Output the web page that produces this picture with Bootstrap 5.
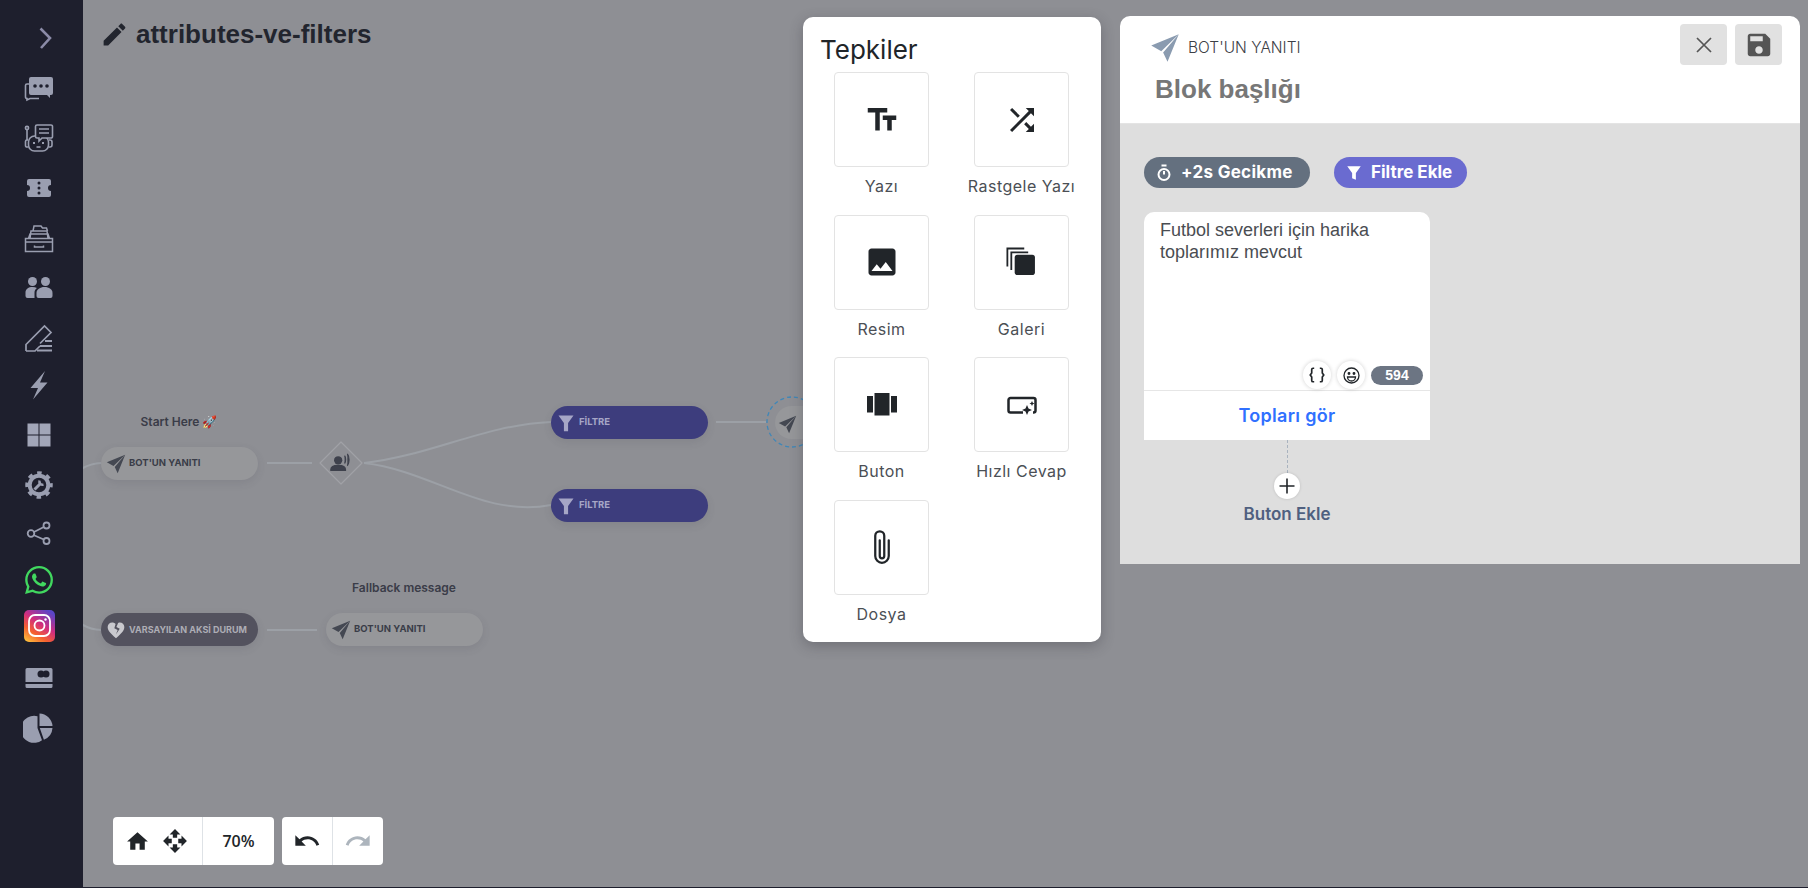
<!DOCTYPE html>
<html lang="tr">
<head>
    <meta charset="UTF-8">
    <meta name="viewport" content="width=device-width, initial-scale=1.0">
    <title>attributes-ve-filters</title>
    <link rel="stylesheet" href="https://cdn.jsdelivr.net/npm/bootstrap@5.3.3/dist/css/bootstrap.min.css">
    <style>
        html, body {
            height: 100%;
            overflow: hidden;
        }

        body {
            background-color: #1e1f2d;
            font-family: "Inter", "Liberation Sans", sans-serif;
        }

        .page-wrap {
            height: 887px;
        }

        /* sidebar */
        .side-nav {
            width: 83px;
            flex: none;
            background-color: #1e1f2d;
            padding-top: 13px;
            position: relative;
            z-index: 2;
        }

        .side-item {
            height: 50px;
            width: 77px;
            color: #9a9eb0;
        }

        .side-item:nth-child(8) { margin-top: -3px; }
        .side-item:nth-child(11) { margin-top: -2px; }
        .side-item:nth-child(12) { margin-top: -3px; }
        .side-item:nth-child(13) { margin-top: -4px; }
        .side-item:nth-child(14) { margin-top: 2px; }
        .side-item:nth-child(15) { margin-top: -1px; }

        /* canvas */
        .flow-canvas {
            background-color: #8e8f94;
            overflow: hidden;
        }

        .flow-title {
            top: 17px;
            left: 17px;
            gap: 7px;
            color: #22252e;
            font-family: "Liberation Sans", sans-serif;
            font-weight: 700;
            font-size: 26px;
            line-height: 34px;
        }

        .flow-lines {
            top: 0;
            left: 0;
        }

        .flow-node {
            width: 157px;
            height: 33px;
            border-radius: 17px;
            padding-left: 5px;
            background-color: #96979a;
            color: #3a3d48;
            font-size: 9.5px;
            font-weight: 700;
            white-space: nowrap;
            box-shadow: 0 3px 8px rgba(60, 60, 70, .12);
        }

        .flow-node svg {
            flex: none;
            margin-right: 3px;
        }

        .node-filter {
            background-color: #3d3d7d;
            color: #a6a6c6;
        }

        .node-fallback {
            background-color: #53525e;
            color: #adadb5;
            font-size: 9px;
        }

        .flow-caption {
            color: #3a3c48;
            font-size: 12px;
            font-weight: 600;
            white-space: nowrap;
            transform: translateX(-50%);
        }

        .tool-group {
            top: 817px;
            height: 48px;
            border-radius: 4px;
            background-color: #fff;
            color: #212529;
        }

        .tool-cell {
            height: 100%;
        }

        .tool-cell + .tool-cell {
            border-left: 1px solid #dee2e6;
        }

        .move-cell {
            width: 89px;
            gap: 12px;
            padding-right: 2px;
        }

        .zoom-value {
            font-family: "Open Sans", sans-serif;
            font-weight: 600;
            font-size: 16px;
        }

        /* Tepkiler panel */
        .react-panel {
            top: 17px;
            left: 720px;
            width: 298px;
            height: 625px;
            border: 0;
            border-radius: 10px;
            box-shadow: 0 4px 14px rgba(40, 40, 50, .3);
        }

        .react-title {
            height: 55px;
            margin: 0;
            padding: 14px 0 0 17px;
            color: #212529;
            font-size: 26px;
            font-weight: 400;
            line-height: 38px;
        }

        .react-grid {
            display: grid;
            grid-template-columns: 95px 95px;
            grid-auto-rows: 142.5px;
            column-gap: 45px;
            padding-left: 31px;
        }

        .react-tile {
            width: 95px;
            height: 95px;
            border: 1px solid #e3e3e3;
            border-radius: 4px;
            color: #212529;
        }

        .react-label {
            margin-top: 8px;
            color: #4b4f55;
            font-size: 16px;
            letter-spacing: .5px;
            line-height: 22px;
            white-space: nowrap;
        }

        /* block editor */
        .block-panel {
            top: 16px;
            left: 1037px;
            width: 680px;
            height: 548px;
            border: 0;
            border-radius: 10px 10px 0 0;
            overflow: hidden;
        }

        .block-head {
            height: 108px;
            flex: none;
            padding: 8px 18px 0 30px;
            border-bottom: 1px solid #e4e4e4;
        }

        .block-kind {
            height: 47px;
            color: #3c4046;
            font-size: 15.5px;
            font-weight: 300;
        }

        .block-heading {
            margin: 3px 0 0 5px;
            color: #777;
            font-family: "Liberation Sans", sans-serif;
            font-size: 26px;
            font-weight: 700;
            line-height: 30px;
        }

        .head-btn {
            width: 47px;
            height: 41px;
            padding: 0;
            border: 0;
            border-radius: 4px;
            background-color: #e1e1e1;
            color: #555;
        }

        .block-body {
            flex: 1;
            padding: 33px 0 0 24px;
            background-color: #dedede;
        }

        .pill-btn {
            height: 31px;
            padding: 0 11px;
            border-radius: 16px;
            color: #fff;
            font-size: 17px;
            font-weight: 700;
            white-space: nowrap;
        }

        .pill-delay {
            width: 166px;
            background-color: #64707f;
            letter-spacing: .3px;
        }

        .pill-filter {
            width: 133px;
            margin-left: -1px;
            background-color: #6a6bd0;
        }

        .msg-box {
            width: 286px;
            margin-top: 24px;
            border-radius: 10px 10px 0 0;
            background-color: #fff;
        }

        .msg-text {
            height: 179px;
            padding: 7px 7px 1px 16px;
            border-bottom: 1px solid #e6e6e6;
            color: #4a4d52;
            font-family: "Liberation Sans", sans-serif;
            font-size: 18px;
            line-height: 22px;
        }

        .msg-tools {
            gap: 6px;
        }

        .msg-tool {
            width: 28px;
            height: 28px;
            border-radius: 50%;
            background-color: #fff;
            box-shadow: 0 0 4px rgba(0, 0, 0, .18);
        }

        .msg-count {
            width: 52px;
            height: 19px;
            border-radius: 10px;
            background-color: #6c7583;
            color: #fff;
            font-size: 14px;
            font-weight: 700;
        }

        .msg-action {
            height: 49px;
            color: #3070ff;
            font-size: 18px;
            font-weight: 600;
            letter-spacing: .3px;
        }

        .add-col {
            width: 286px;
        }

        .add-line {
            height: 33px;
            border-left: 1px dashed #a9b3bf;
        }

        .add-circle {
            width: 26px;
            height: 26px;
            border-radius: 50%;
            background-color: #fff;
            box-shadow: 0 0 3px rgba(0, 0, 0, .15);
        }

        .add-label {
            margin-top: 3px;
            color: #4f6080;
            font-size: 17px;
            font-weight: 600;
        }
    </style>
</head>

<body>
    <div class="page-wrap d-flex">
        <nav class="side-nav d-flex flex-column">
            <div class="side-item d-flex align-items-center justify-content-center">
                <svg width="32" height="32" viewBox="0 0 32 32" fill="none" stroke="#8b8ba7" stroke-width="2.6"><path d="M17.5 6.5 27 16l-9 10"/></svg>
            </div>
            <div class="side-item d-flex align-items-center justify-content-center">
                <svg width="32" height="32" viewBox="0 0 32 32"><path fill="currentColor" d="M8 5h20a2 2 0 0 1 2 2v14a2 2 0 0 1-2 2h-1v3l-3-3H8a2 2 0 0 1-2-2V7a2 2 0 0 1 2-2z"/><path fill="none" stroke="currentColor" stroke-width="1.6" d="M6 12H4a1.5 1.5 0 0 0-1.5 1.5V25A1.5 1.5 0 0 0 4 26.5v1.5l3-1.5h9"/><circle cx="12" cy="14" r="1.8" fill="#1e1f2d"/><circle cx="18" cy="14" r="1.8" fill="#1e1f2d"/><circle cx="24" cy="14" r="1.8" fill="#1e1f2d"/></svg>
            </div>
            <div class="side-item d-flex align-items-center justify-content-center">
                <svg width="32" height="32" viewBox="0 0 32 32" fill="none" stroke="currentColor" stroke-width="1.6"><rect x="5.5" y="14" width="20" height="15" rx="6"/><path d="M5 18H4a1.5 1.5 0 0 0-1.5 1.5v4A1.5 1.5 0 0 0 4 25h1M26 18h1a2 2 0 0 1 2 2v3a2 2 0 0 1-2 2h-1M4 7v11"/><circle cx="4" cy="6" r="1.6"/><path fill="#1e1f2d" d="M14 3h14a1.5 1.5 0 0 1 1.5 1.5v10A1.5 1.5 0 0 1 28 16h-9l-3 3v-3h-2a1.5 1.5 0 0 1-1.5-1.5v-10A1.5 1.5 0 0 1 14 3z"/><path d="M16 7h10M16 11h10"/><path stroke-width="2" d="M11 20v2M20 20v2"/><path d="M13.5 25h4"/></svg>
            </div>
            <div class="side-item d-flex align-items-center justify-content-center">
                <svg width="32" height="32" viewBox="0 0 32 32"><path fill="currentColor" d="M6 7h20a2 2 0 0 1 2 2v4a3 3 0 0 0 0 6v4a2 2 0 0 1-2 2H6a2 2 0 0 1-2-2v-4a3 3 0 0 0 0-6V9a2 2 0 0 1 2-2z"/><circle cx="16" cy="11" r="1.5" fill="#1e1f2d"/><circle cx="16" cy="16" r="1.5" fill="#1e1f2d"/><circle cx="16" cy="21" r="1.5" fill="#1e1f2d"/></svg>
            </div>
            <div class="side-item d-flex align-items-center justify-content-center">
                <svg width="32" height="32" viewBox="0 0 32 32" fill="none" stroke="currentColor" stroke-width="1.5"><path d="M2.5 16.5h27v13h-27zM2.5 20h27M7 16.5 8 9h16l1 7.5M5.5 16.5 7 12h18l1.500 4.500M10 9l1-5h7l1.500 2h4l1 3M11.500 23.500v1.500h9v-1.500"/></svg>
            </div>
            <div class="side-item d-flex align-items-center justify-content-center">
                <svg width="32" height="32" viewBox="0 0 32 32"><circle cx="9.500" cy="9.500" r="4.500" fill="currentColor"/><circle cx="22.500" cy="9.500" r="4.500" fill="currentColor"/><path fill="currentColor" d="M2.500 24v-3.500C2.500 17 5.500 15 9.500 15c1.700 0 3.200.4 4.400 1-1.500 1.200-2.400 2.900-2.400 4.700V26H4.500a2 2 0 0 1-2-2z"/><path fill="currentColor" d="M13.500 24v-3.300c0-3.200 3.600-5.700 8-5.700 4.600 0 8 2.500 8 5.700V24a2 2 0 0 1-2 2h-12a2 2 0 0 1-2-2z"/></svg>
            </div>
            <div class="side-item d-flex align-items-center justify-content-center">
                <svg width="32" height="32" viewBox="0 0 32 32" fill="none" stroke="currentColor" stroke-width="1.700"><path d="M3 29v-6.500L21.500 4l6.500 6.500L17 21.500"/><path d="M3 29h9l5-5"/><path stroke-width="2" d="M22 19h7M17 24h12M14 28.500h15"/></svg>
            </div>
            <div class="side-item d-flex align-items-center justify-content-center">
                <svg width="32" height="32" viewBox="0 0 32 32"><path fill="currentColor" d="M22 2 7.500 19H15l-5 11.500L24.500 13.500H17z"/></svg>
            </div>
            <div class="side-item d-flex align-items-center justify-content-center">
                <svg width="32" height="32" viewBox="0 0 32 32" fill="#a2a6b8"><rect x="4.500" y="4.500" width="11" height="11"/><rect x="16.500" y="4.500" width="11" height="11"/><rect x="4.500" y="16.500" width="11" height="11"/><rect x="16.500" y="16.500" width="11" height="11"/></svg>
            </div>
            <div class="side-item d-flex align-items-center justify-content-center">
                <svg width="32" height="32" viewBox="0 0 32 32" fill="none" stroke="currentColor"><circle cx="16" cy="16" r="12" stroke-width="3.500" stroke-dasharray="4.500 4.920" stroke-dashoffset="2.200"/><circle cx="16" cy="16" r="9.300" stroke-width="4"/><path stroke-width="3" d="M11.500 20.500 17 15"/><path stroke-width="2.500" d="M16.500 11.500a3.500 3.500 0 0 0 4 4.300"/></svg>
            </div>
            <div class="side-item d-flex align-items-center justify-content-center">
                <svg width="32" height="32" viewBox="0 0 32 32" fill="none" stroke="currentColor" stroke-width="1.800"><circle cx="8" cy="16.500" r="3.300"/><circle cx="23.500" cy="8.500" r="3"/><circle cx="23.500" cy="24" r="3"/><path d="M11 15 20.800 10M11 18.200l9.800 4.300"/></svg>
            </div>
            <div class="side-item d-flex align-items-center justify-content-center">
                <svg width="28" height="28" viewBox="0 0 24 24" fill="#41d85f"><path d="M17.472 14.382c-.297-.149-1.758-.867-2.03-.967-.273-.099-.471-.148-.67.15-.197.297-.767.966-.94 1.164-.173.199-.347.223-.644.075-.297-.15-1.255-.463-2.39-1.475-.883-.788-1.48-1.761-1.653-2.059-.173-.297-.018-.458.13-.606.134-.133.298-.347.446-.52.149-.174.198-.298.298-.497.099-.198.05-.371-.025-.52-.075-.149-.669-1.612-.916-2.207-.242-.579-.487-.5-.669-.51-.173-.008-.371-.01-.57-.01-.198 0-.52.074-.792.372-.272.297-1.04 1.016-1.04 2.479 0 1.462 1.065 2.875 1.213 3.074.149.198 2.096 3.2 5.077 4.487.709.306 1.262.489 1.694.625.712.227 1.36.195 1.871.118.571-.085 1.758-.719 2.006-1.413.248-.694.248-1.289.173-1.413-.074-.124-.272-.198-.57-.347m-5.421 7.403h-.004a9.87 9.87 0 01-5.031-1.378l-.361-.214-3.741.982.998-3.648-.235-.374a9.86 9.86 0 01-1.51-5.26c.001-5.45 4.436-9.884 9.888-9.884 2.64 0 5.122 1.03 6.988 2.898a9.825 9.825 0 012.893 6.994c-.003 5.45-4.437 9.884-9.885 9.884m8.413-18.297A11.815 11.815 0 0012.05 0C5.495 0 .16 5.335.157 11.892c0 2.096.547 4.142 1.588 5.945L.057 24l6.305-1.654a11.882 11.882 0 005.683 1.448h.005c6.554 0 11.89-5.335 11.893-11.893a11.821 11.821 0 00-3.48-8.413z"/></svg>
            </div>
            <div class="side-item d-flex align-items-center justify-content-center">
                <svg width="32" height="32" viewBox="0 0 32 32"><defs><linearGradient id="igGrad" x1="0.1" y1="1" x2="0.75" y2="0"><stop offset="0" stop-color="#fdc13c"/><stop offset=".3" stop-color="#f5612f"/><stop offset=".6" stop-color="#d12d7f"/><stop offset="1" stop-color="#5a45c8"/></linearGradient></defs><rect x="1" y="0" width="31" height="32" rx="5" fill="url(#igGrad)"/><rect x="6" y="5" width="21" height="21" rx="6" fill="none" stroke="#fff" stroke-width="1.800"/><circle cx="16.500" cy="15.500" r="5" fill="none" stroke="#fff" stroke-width="1.800"/><circle cx="22.500" cy="9.500" r="1.200" fill="#fff"/></svg>
            </div>
            <div class="side-item d-flex align-items-center justify-content-center">
                <svg width="32" height="32" viewBox="0 0 32 32"><path fill="currentColor" d="M4 6h24a1.500 1.500 0 0 1 1.500 1.500V20h-27V7.500A1.500 1.500 0 0 1 4 6zM2.500 22h27v2.500A1.500 1.500 0 0 1 28 26H4a1.500 1.500 0 0 1-1.500-1.500z"/><circle cx="18" cy="12" r="3.500" fill="#1e1f2d"/><circle cx="23" cy="12" r="3.500" fill="#1e1f2d"/></svg>
            </div>
            <div class="side-item d-flex align-items-center justify-content-center">
                <svg width="32" height="32" viewBox="0 0 32 32"><path fill="currentColor" d="M14.500 5.300V17l4.500 12.300A13.500 13.500 0 1 1 14.500 5.300zM16.500 2.500A13.500 13.500 0 0 1 29.500 15h-13zM16.800 17h12.700a13.500 13.500 0 0 1-8.600 11.700z"/></svg>
            </div>
        </nav>

        <main class="flow-canvas flex-grow-1 position-relative">
            <!-- connectors are drawn in page coords minus the 83px sidebar -->
            <svg class="flow-lines position-absolute" width="1725" height="887" fill="none" stroke="#9ca0a6" stroke-width="2">
                <path d="M18 463C-50 466 -50 627 18 630"/>
                <path d="M184 463h45M184 630h50M633 422h50"/>
                <path d="M281 463C350 455 400 425 468 422M281 463C350 471 400 518 468 505"/>
                <path d="M258 442 279 463 258 484 237 463z" stroke="#a0a1a6" stroke-width="1.200" stroke-linejoin="round"/>
                <circle cx="709" cy="422" r="25" stroke="#3f87b8" stroke-width="1.300" stroke-dasharray="4 3"/>
                <rect x="692" y="406" width="60" height="33" rx="16.500" fill="#96979a" stroke="none"/>
            </svg>

            <svg class="position-absolute" style="left:695px;top:415px" width="19" height="19" viewBox="0 0 24 24" fill="#444852"><path d="M23 1 1 10l8 4.500zM23 1 10.500 15.500 14 23z"/></svg>

            <span class="flow-caption position-absolute" style="left:96px;top:413px">Start Here 🚀</span>
            <div class="flow-node position-absolute d-flex align-items-center" style="left:18px;top:447px">
                <svg width="20" height="20" viewBox="0 0 24 24" fill="#444852"><path d="M23 1 1 10l8 4.500zM23 1 10.500 15.500 14 23z"/></svg>BOT'UN YANITI
            </div>
            <svg class="position-absolute" style="left:246px;top:452px" width="22" height="22" viewBox="0 0 24 24" fill="#3e414c"><circle cx="10" cy="9" r="4.500"/><path d="M2 20v-1c0-3 3.500-4.500 8-4.500s8 1.500 8 4.500v1zM17 4c1.500 1.500 1.500 7 0 8.500M20 2c2.500 3 2.500 10 0 13" stroke="#3e414c" stroke-width="1.300" fill-rule="nonzero"/></svg>
            <div class="flow-node node-filter position-absolute d-flex align-items-center" style="left:468px;top:406px">
                <svg width="20" height="20" viewBox="0 0 24 24" fill="#a6a6c6"><path d="M3 3h18l-6.500 9v10h-5V12z"/></svg>FİLTRE
            </div>
            <div class="flow-node node-filter position-absolute d-flex align-items-center" style="left:468px;top:489px">
                <svg width="20" height="20" viewBox="0 0 24 24" fill="#a6a6c6"><path d="M3 3h18l-6.500 9v10h-5V12z"/></svg>FİLTRE
            </div>
            <div class="flow-node node-fallback position-absolute d-flex align-items-center" style="left:18px;top:613px">
                <svg width="20" height="20" viewBox="0 0 24 24" fill="#c9c9ce"><path d="M12 22C5 16 2 12.500 2 8.500 2 5 4.500 3 7.500 3c1.500 0 3 .6 4 1.800L10 10l4 2-2 5 4.500-6.500-4-2 2-5C15.300 3.200 16 3 16.500 3 19.500 3 22 5 22 8.500c0 4-3 7.500-10 13.500z"/></svg><span>VARSAYILAN AKSİ DURUM</span>
            </div>
            <span class="flow-caption position-absolute" style="left:321px;top:579px">Fallback message</span>
            <div class="flow-node position-absolute d-flex align-items-center" style="left:243px;top:613px">
                <svg width="20" height="20" viewBox="0 0 24 24" fill="#444852"><path d="M23 1 1 10l8 4.500zM23 1 10.500 15.500 14 23z"/></svg>BOT'UN YANITI
            </div>

            <div class="flow-title position-absolute d-flex align-items-center">
                <svg width="29" height="29" viewBox="0 0 24 24" fill="currentColor"><path d="M3 17.250V21h3.750L17.810 9.940l-3.750-3.750L3 17.250zM20.710 7.040c.39-.39.39-1.020 0-1.410l-2.340-2.340c-.39-.39-1.020-.39-1.410 0l-1.830 1.830 3.750 3.750 1.830-1.830z"/></svg>
                attributes-ve-filters
            </div>

            <div class="tool-group position-absolute d-flex align-items-center" style="left:30px;width:161px">
                <div class="tool-cell move-cell d-flex align-items-center justify-content-center">
                    <svg width="25" height="25" viewBox="0 0 24 24" fill="currentColor"><path d="M10 20v-6h4v6h5v-8h3L12 3 2 12h3v8z"/></svg>
                    <svg width="26" height="26" viewBox="0 0 24 24" fill="currentColor"><path d="M10 9h4V6h3l-5-5-5 5h3v3zm-1 1H6V7l-5 5 5 5v-3h3v-4zm14 2l-5-5v3h-3v4h3v3l5-5zm-9 3h-4v3H7l5 5 5-5h-3v-3z"/></svg>
                </div>
                <div class="tool-cell zoom-value flex-grow-1 d-flex align-items-center justify-content-center">70%</div>
            </div>
            <div class="tool-group position-absolute d-flex align-items-center" style="left:199px;width:101px">
                <div class="tool-cell d-flex align-items-center justify-content-center" style="width:50px">
                    <svg width="28" height="28" viewBox="0 0 24 24" fill="currentColor"><path d="M12.500 8c-2.650 0-5.050.99-6.900 2.600L2 7v9h9l-3.620-3.620c1.390-1.160 3.160-1.880 5.120-1.880 3.540 0 6.550 2.310 7.600 5.500l2.370-.78C21.080 11.030 17.150 8 12.500 8z"/></svg>
                </div>
                <div class="tool-cell flex-grow-1 d-flex align-items-center justify-content-center">
                    <svg width="28" height="28" viewBox="0 0 24 24" fill="#adb5bd"><path d="M18.400 10.600C16.550 8.990 14.150 8 11.500 8c-4.650 0-8.580 3.030-9.960 7.220L3.900 16c1.050-3.190 4.050-5.500 7.600-5.500 1.950 0 3.730.72 5.120 1.880L13 16h9V7l-3.600 3.600z"/></svg>
                </div>
            </div>

            <div class="react-panel card position-absolute">
                <h2 class="react-title">Tepkiler</h2>
                <div class="react-grid">
                    <div class="d-flex flex-column align-items-center">
                        <div class="react-tile d-flex align-items-center justify-content-center">
                            <svg width="36" height="36" viewBox="0 0 24 24" fill="currentColor"><path d="M2.500 4v3h5v12h3V7h5V4h-13zm19 5h-9v3h3v7h3v-7h3V9z"/></svg>
                        </div>
                        <span class="react-label">Yazı</span>
                    </div>
                    <div class="d-flex flex-column align-items-center">
                        <div class="react-tile d-flex align-items-center justify-content-center">
                            <svg width="36" height="36" viewBox="0 0 24 24" fill="currentColor"><path d="M10.590 9.170L5.410 4 4 5.410l5.170 5.170 1.420-1.410zM14.500 4l2.040 2.040L4 18.590 5.410 20 17.960 7.460 20 9.500V4h-5.500zm.33 9.410l-1.410 1.410 3.130 3.130L14.500 20H20v-5.500l-2.040 2.040-3.130-3.130z"/></svg>
                        </div>
                        <span class="react-label">Rastgele Yazı</span>
                    </div>
                    <div class="d-flex flex-column align-items-center">
                        <div class="react-tile d-flex align-items-center justify-content-center">
                            <svg width="36" height="36" viewBox="0 0 24 24" fill="currentColor"><path d="M21 19V5c0-1.100-.9-2-2-2H5c-1.100 0-2 .9-2 2v14c0 1.100.9 2 2 2h14c1.100 0 2-.9 2-2zM8.500 13.500l2.500 3.010L14.500 12l4.500 6H5l3.500-4.500z"/></svg>
                        </div>
                        <span class="react-label">Resim</span>
                    </div>
                    <div class="d-flex flex-column align-items-center">
                        <div class="react-tile d-flex align-items-center justify-content-center">
                            <svg width="36" height="36" viewBox="0 0 32 32" fill="currentColor"><rect x="9.500" y="9.500" width="18" height="18" rx="2.500"/><path fill="none" stroke="currentColor" stroke-width="1.600" d="M3 20V4h15M6.500 23V7.500h15"/></svg>
                        </div>
                        <span class="react-label">Galeri</span>
                    </div>
                    <div class="d-flex flex-column align-items-center">
                        <div class="react-tile d-flex align-items-center justify-content-center">
                            <svg width="36" height="36" viewBox="0 0 24 24" fill="currentColor"><path d="M7 19h10V4H7v15zm-5-2h4V6H2v11zm16-11v11h4V6h-4z"/></svg>
                        </div>
                        <span class="react-label">Buton</span>
                    </div>
                    <div class="d-flex flex-column align-items-center">
                        <div class="react-tile d-flex align-items-center justify-content-center">
                            <svg width="32" height="32" viewBox="0 0 32 32" fill="none" stroke="currentColor" stroke-width="2.500"><path d="M17 23.500H4.500a2 2 0 0 1-2-2V11a2 2 0 0 1 2-2h23a2 2 0 0 1 2 2v10.500a2 2 0 0 1-2 2h-.5"/><path fill="currentColor" stroke="none" d="m21 16 1.500 3.500L26 21l-3.500 1.500L21 26l-1.500-3.500L16 21l3.500-1.500zM26 12l.8 1.700 1.700.8-1.700.8-.8 1.700-.8-1.700-1.700-.8 1.700-.8z"/></svg>
                        </div>
                        <span class="react-label">Hızlı Cevap</span>
                    </div>
                    <div class="d-flex flex-column align-items-center">
                        <div class="react-tile d-flex align-items-center justify-content-center">
                            <svg width="36" height="36" viewBox="0 0 16 16" fill="currentColor"><path d="M4.500 3a2.500 2.500 0 0 1 5 0v9a1.500 1.500 0 0 1-3 0V5a.5.5 0 0 1 1 0v7a.5.5 0 0 0 1 0V3a1.500 1.500 0 1 0-3 0v9a2.500 2.500 0 0 0 5 0V5a.5.5 0 0 1 1 0v7a3.500 3.500 0 1 1-7 0V3z"/></svg>
                        </div>
                        <span class="react-label">Dosya</span>
                    </div>
                </div>
            </div>

            <div class="block-panel card position-absolute">
                <div class="block-head d-flex justify-content-between">
                    <div>
                        <div class="block-kind d-flex align-items-center gap-2">
                            <svg width="30" height="30" viewBox="0 0 24 24" fill="#8a9bb0"><path d="M23 1 1 10l8 4.500zM23 1 10.500 15.500 14 23z"/></svg>
                            BOT'UN YANITI
                        </div>
                        <h3 class="block-heading">Blok başlığı</h3>
                    </div>
                    <div class="d-flex gap-2 align-items-start">
                        <button type="button" class="head-btn btn d-flex align-items-center justify-content-center">
                            <svg width="20" height="20" viewBox="0 0 20 20" fill="none" stroke="currentColor" stroke-width="1.700"><path d="M3 3l14 14M17 3 3 17"/></svg>
                        </button>
                        <button type="button" class="head-btn btn d-flex align-items-center justify-content-center">
                            <svg width="30" height="30" viewBox="0 0 24 24" fill="currentColor"><path d="M17 3H5c-1.110 0-2 .9-2 2v14c0 1.100.89 2 2 2h14c1.100 0 2-.9 2-2V7l-4-4zm-5 16c-1.660 0-3-1.340-3-3s1.340-3 3-3 3 1.340 3 3-1.340 3-3 3zm3-10H5V5h10v4z"/></svg>
                        </button>
                    </div>
                </div>
                <div class="block-body d-flex flex-column">
                    <div class="d-flex" style="gap:25px">
                        <div class="pill-btn pill-delay d-flex align-items-center gap-2">
                            <svg width="18" height="18" viewBox="0 0 18 18" fill="none" stroke="#fff" stroke-width="2"><circle cx="9" cy="10.500" r="5.500"/><path d="M6.500 1.500h5M9 7v3.500"/></svg>
                            +2s Gecikme
                        </div>
                        <div class="pill-btn pill-filter d-flex align-items-center gap-2">
                            <svg width="18" height="18" viewBox="0 0 24 24" fill="#fff"><path d="M3 3h18l-6.500 9v9l-5-2v-7z"/></svg>
                            Filtre Ekle
                        </div>
                    </div>
                    <div class="msg-box">
                        <div class="msg-text d-flex flex-column">
                            <div>Futbol severleri için harika toplarımız mevcut</div>
                            <div class="msg-tools mt-auto d-flex align-items-center justify-content-end">
                                <div class="msg-tool d-flex align-items-center justify-content-center">
                                    <svg width="18" height="18" viewBox="0 0 16 16" fill="none" stroke="#212529" stroke-width="1.500"><path d="M5.500 2H4.500a1.200 1.200 0 0 0-1.200 1.200v3L2 8l1.300 1.800v3A1.200 1.200 0 0 0 4.500 14h1M10.500 2h1a1.200 1.200 0 0 1 1.200 1.200v3L14 8l-1.300 1.800v3a1.200 1.200 0 0 1-1.200 1.200h-1"/></svg>
                                </div>
                                <div class="msg-tool d-flex align-items-center justify-content-center">
                                    <svg width="17" height="17" viewBox="0 0 17 17" fill="none" stroke="#212529" stroke-width="1.300"><circle cx="8.500" cy="8.500" r="7.500"/><circle cx="6" cy="6.500" r=".8" fill="#212529"/><circle cx="11" cy="6.500" r=".8" fill="#212529"/><path d="M4.500 10a4 4 0 0 0 8 0z"/></svg>
                                </div>
                                <div class="msg-count d-flex align-items-center justify-content-center">594</div>
                            </div>
                        </div>
                        <div class="msg-action d-flex align-items-center justify-content-center">Topları gör</div>
                    </div>
                    <div class="add-col d-flex flex-column align-items-center">
                        <div class="add-line"></div>
                        <div class="add-circle d-flex align-items-center justify-content-center">
                            <svg width="18" height="18" viewBox="0 0 18 18" stroke="#212529" stroke-width="1.600"><path d="M9 1.500v15M1.500 9h15"/></svg>
                        </div>
                        <div class="add-label">Buton Ekle</div>
                    </div>
                </div>
            </div>
        </main>
    </div>

    <script src="https://cdn.jsdelivr.net/npm/bootstrap@5.3.3/dist/js/bootstrap.bundle.min.js"></script>
</body>

</html>
